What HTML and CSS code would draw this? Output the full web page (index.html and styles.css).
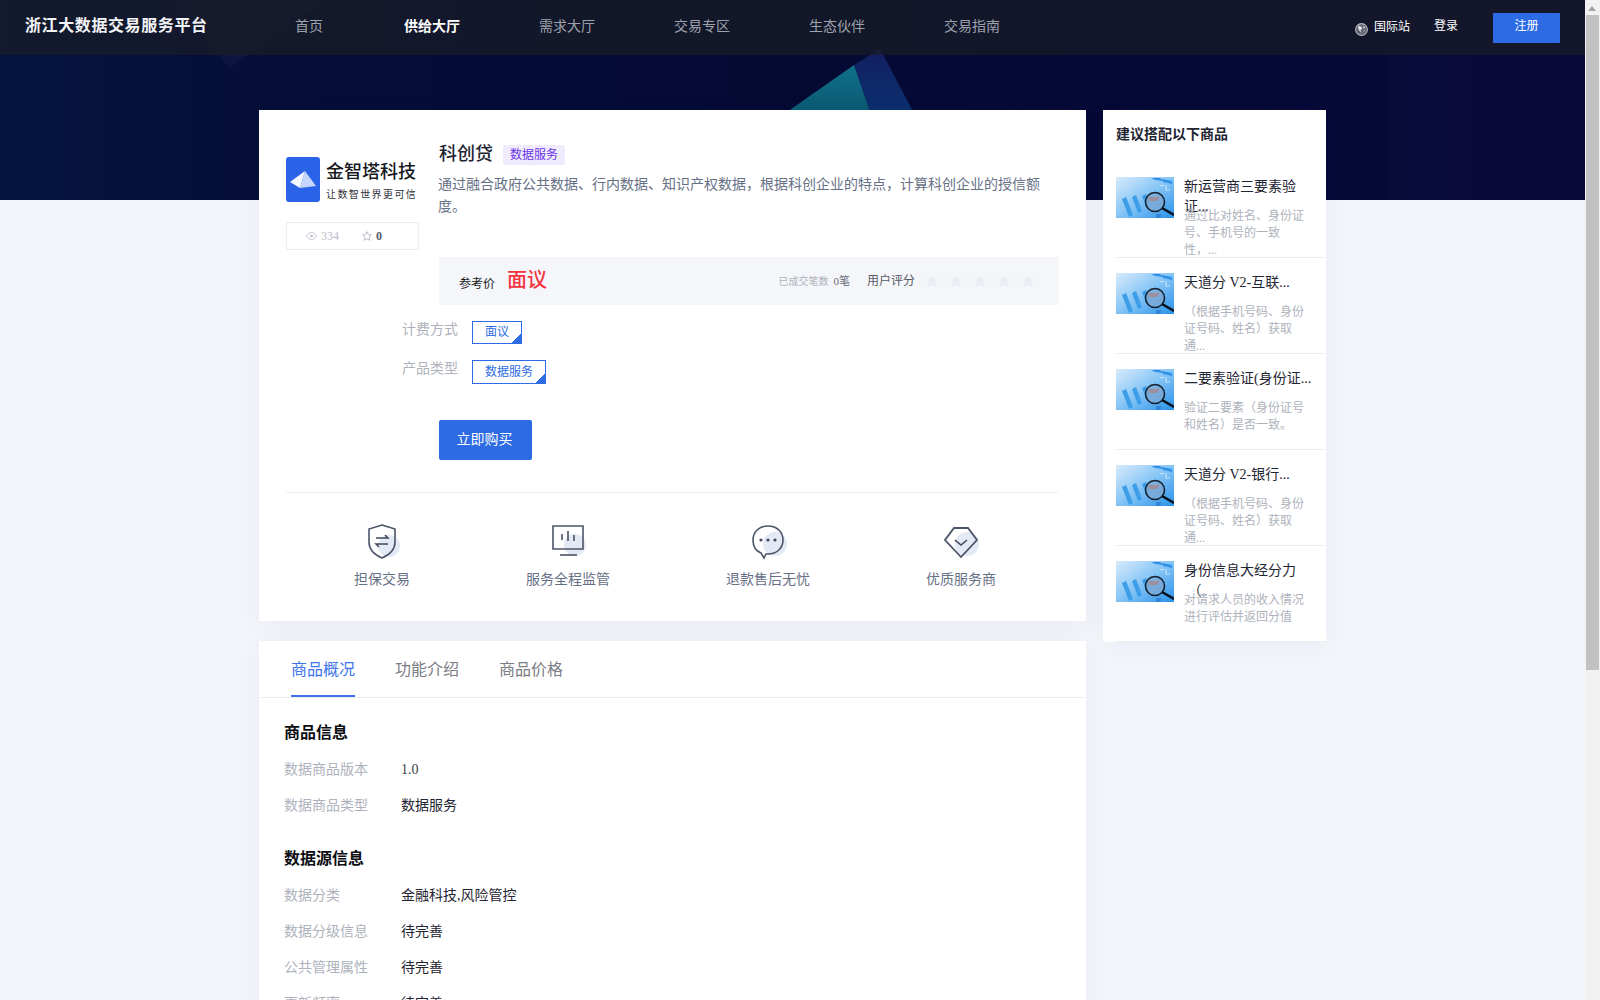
FILE: index.html
```html
<!DOCTYPE html>
<html lang="zh">
<head>
<meta charset="utf-8">
<title>科创贷 - 浙江大数据交易服务平台</title>
<link rel="stylesheet" href="styles.css">
</head>
<body>
<svg class="defs" width="0" height="0" aria-hidden="true">
  <defs>
    <linearGradient id="thumbBg" x1="0" y1="0" x2="1" y2="1">
      <stop offset="0" stop-color="#d8ebfc"/><stop offset=".5" stop-color="#84c4f6"/><stop offset="1" stop-color="#2a93ea"/>
    </linearGradient>
    <symbol id="thumb" viewBox="0 0 58 41">
      <rect width="58" height="41" fill="url(#thumbBg)"/>
      <path d="M35 1h9l4 3-9-1zM46 2l10 2v3l-9-2z" fill="#2f92e4"/>
      <path d="M44 9c2-1 3-1 4 0M50 8v5c2 1 3 0 4-1" fill="none" stroke="#eaf5ff" stroke-width=".8"/>
      <path d="M6 22l4-2 7 18-4 2zM16 20l4-2 6 16-4 2zM26 19l4-2 4 10-4 2z" fill="#3d9ee8"/>
      <path d="M40 37h5v4h-5z" fill="#2f86d6"/>
      <circle cx="39" cy="25" r="9.500" fill="#7fa8d2" fill-opacity=".75" stroke="#14222f" stroke-width="1.600"/>
      <path d="M33 20h11l-3 4h-9z" fill="#b87a70" fill-opacity=".55"/>
      <path d="M46 31l12 7" stroke="#0a1420" stroke-width="2.600"/>
    </symbol>
    <symbol id="star" viewBox="0 0 14 14">
      <path d="M7 .8l1.900 4.200 4.600.5-3.400 3.100 1 4.600L7 10.900l-4.100 2.300 1-4.600L.5 5.500l4.600-.5z" fill="#eaedf4"/>
    </symbol>
  </defs>
</svg>
<div class="viewport">
  <div class="page">
    <div class="hero-art">
      <svg width="1585" height="200" viewBox="0 0 1585 200" preserveAspectRatio="none" aria-hidden="true">
        <defs>
          <linearGradient id="heroBg" x1="0" y1="0" x2="1" y2="0">
            <stop offset="0" stop-color="#04143f"/><stop offset=".15" stop-color="#050f38"/><stop offset=".5" stop-color="#050a33"/><stop offset="1" stop-color="#070838"/>
          </linearGradient>
          <linearGradient id="teal" x1="0" y1="0" x2="0" y2="1">
            <stop offset="0" stop-color="#0f7089"/><stop offset=".4" stop-color="#0b5670"/><stop offset="1" stop-color="#0a4a66"/>
          </linearGradient>
          <linearGradient id="band" x1="0" y1="0" x2="0" y2="1">
            <stop offset="0" stop-color="#121f60"/><stop offset=".4" stop-color="#0c2f6e"/><stop offset="1" stop-color="#0b3370"/>
          </linearGradient>
        </defs>
        <rect width="1585" height="200" fill="url(#heroBg)"/>
        <rect x="1387" width="198" height="200" fill="#ffffff" fill-opacity=".012"/>
        <path d="M170 0h155l-95 68z" fill="#ffffff" fill-opacity=".03"/>
        <path d="M854 65L880 49 960 200H900z" fill="url(#band)"/>
        <path d="M854 65L740 145V200H900z" fill="url(#teal)"/>
      </svg>
    </div>

    <header class="topbar">
      <div class="brand">浙江大数据交易服务平台</div>
      <nav class="nav">
        <a class="nav-link">首页</a>
        <a class="nav-link is-active">供给大厅</a>
        <a class="nav-link">需求大厅</a>
        <a class="nav-link">交易专区</a>
        <a class="nav-link">生态伙伴</a>
        <a class="nav-link">交易指南</a>
      </nav>
      <div class="account">
        <svg class="globe" width="13" height="13" viewBox="0 0 12 12" aria-hidden="true">
          <circle cx="6" cy="6" r="5.400" fill="#5f6370" stroke="#b7bac2" stroke-width="1"/>
          <path d="M3 2.500l3 1 .5 2-1.500 1 1 3-2-2.500-1-2zM8 2.500l1.500 2-2 .5zM8 7l1-.5-1 2.500z" fill="#e6e7ea"/>
        </svg>
        <span class="intl">国际站</span>
        <span class="login">登录</span>
        <a class="register">注册</a>
      </div>
    </header>

    <main class="content">
      <div class="left-col">
        <section class="card product">
          <div class="product-top">
            <aside class="vendor">
              <div class="logo">
                <svg class="logo-mark" width="34" height="45" viewBox="0 0 34 45" aria-hidden="true">
                  <rect width="34" height="45" rx="3" fill="#2a62e8"/>
                  <path d="M19 14L4 25l10 6z" fill="#f4f7ff"/>
                  <path d="M19 14l11 15-16 2z" fill="#c6d5fb"/>
                </svg>
                <div class="logo-text">
                  <div class="logo-name">金智塔科技</div>
                  <div class="logo-slogan">让数智世界更可信</div>
                </div>
              </div>
              <div class="stats">
                <span class="stat">
                  <svg width="11" height="8" viewBox="0 0 11 8" aria-hidden="true"><path d="M.5 4C2 1.500 3.700.5 5.500.5S9 1.500 10.500 4C9 6.500 7.300 7.500 5.500 7.500S2 6.500.5 4z" fill="none" stroke="#c2c6d0"/><circle cx="5.500" cy="4" r="1.500" fill="#c2c6d0"/></svg>
                  334
                </span>
                <span class="stat stat-dark">
                  <svg width="10" height="10" viewBox="0 0 14 14" aria-hidden="true"><path d="M7 1l1.800 4 4.400.5-3.300 3 .9 4.500L7 10.800 3.200 13l.9-4.500-3.300-3L5.200 5z" fill="none" stroke="#b4b8c4" stroke-width="1.300"/></svg>
                  0
                </span>
              </div>
            </aside>
            <div class="summary">
              <div class="title-row">
                <h1 class="product-name">科创贷</h1>
                <span class="badge">数据服务</span>
              </div>
              <p class="description">通过融合政府公共数据、行内数据、知识产权数据，根据科创企业的特点，计算科创企业的授信额度。</p>
              <div class="price-box">
                <span class="price-label">参考价</span>
                <span class="price-value">面议</span>
                <span class="deals">已成交笔数</span>
                <span class="deals-num">0笔</span>
                <span class="rating-label">用户评分</span>
                <span class="stars">
                  <svg width="14" height="14"><use href="#star"/></svg>
                  <svg width="14" height="14"><use href="#star"/></svg>
                  <svg width="14" height="14"><use href="#star"/></svg>
                  <svg width="14" height="14"><use href="#star"/></svg>
                  <svg width="14" height="14"><use href="#star"/></svg>
                </span>
              </div>
            </div>
          </div>
          <div class="specs">
            <div class="spec"><span class="spec-label">计费方式</span><span class="tag">面议</span></div>
            <div class="spec"><span class="spec-label">产品类型</span><span class="tag">数据服务</span></div>
          </div>
          <a class="buy">立即购买</a>
          <div class="divider"></div>
          <div class="features">
            <div class="feature">
              <svg width="40" height="40" viewBox="0 0 40 40" aria-hidden="true">
                <circle cx="27" cy="25" r="11" fill="#e4e9f6"/>
                <path d="M20 4l13 4v13c0 8-6 13-13 16C13 34 7 29 7 21V8z" fill="none" stroke="#4b5468" stroke-width="1.600"/>
                <path d="M14 17h12l-3-3M26 23H14l3 3" fill="none" stroke="#3f4759" stroke-width="1.500"/>
              </svg>
              <span>担保交易</span>
            </div>
            <div class="feature">
              <svg width="40" height="40" viewBox="0 0 40 40" aria-hidden="true">
                <circle cx="27" cy="24" r="11" fill="#e4e9f6"/>
                <path d="M5 5h30v23H5z" fill="none" stroke="#4b5468" stroke-width="1.600"/>
                <path d="M12 34h17M14 19v-6M20 20V10M26 20v-6" fill="none" stroke="#3f4759" stroke-width="1.500"/>
              </svg>
              <span>服务全程监管</span>
            </div>
            <div class="feature">
              <svg width="40" height="40" viewBox="0 0 40 40" aria-hidden="true">
                <circle cx="27" cy="23" r="12" fill="#e4e9f6"/>
                <path d="M20 5c9 0 15 6 15 14s-6 14-15 14h-2l-2 4-3-5C8 30 5 25 5 19 5 11 11 5 20 5z" fill="none" stroke="#4b5468" stroke-width="1.600"/>
                <circle cx="13" cy="19" r="1.600" fill="#3f4759"/><circle cx="20" cy="19" r="1.600" fill="#3f4759"/><circle cx="27" cy="19" r="1.600" fill="#3f4759"/>
              </svg>
              <span>退款售后无忧</span>
            </div>
            <div class="feature">
              <svg width="40" height="40" viewBox="0 0 40 40" aria-hidden="true">
                <circle cx="26" cy="23" r="12" fill="#e4e9f6"/>
                <path d="M13 7h14l9 12-16 17L4 19z" fill="none" stroke="#4b5468" stroke-width="1.800"/>
                <path d="M14 19l6 5 6-5" fill="none" stroke="#3f4759" stroke-width="1.600"/>
              </svg>
              <span>优质服务商</span>
            </div>
          </div>
        </section>

        <section class="card detail">
          <div class="tabs">
            <a class="tab is-active">商品概况</a>
            <a class="tab">功能介绍</a>
            <a class="tab">商品价格</a>
          </div>
          <div class="detail-body">
            <h2 class="detail-title">商品信息</h2>
            <div class="row"><span class="row-label">数据商品版本</span><span class="row-value row-num">1.0</span></div>
            <div class="row"><span class="row-label">数据商品类型</span><span class="row-value">数据服务</span></div>
            <h2 class="detail-title detail-title-next">数据源信息</h2>
            <div class="row"><span class="row-label">数据分类</span><span class="row-value">金融科技,风险管控</span></div>
            <div class="row"><span class="row-label">数据分级信息</span><span class="row-value">待完善</span></div>
            <div class="row"><span class="row-label">公共管理属性</span><span class="row-value">待完善</span></div>
            <div class="row"><span class="row-label">更新频率</span><span class="row-value">待完善</span></div>
          </div>
        </section>
      </div>

      <aside class="card related">
        <h3 class="related-title">建议搭配以下商品</h3>
        <ul class="related-list">
          <li class="item">
            <svg class="thumb" width="58" height="41"><use href="#thumb"/></svg>
            <div class="item-text">
              <div class="item-name">新运营商三要素验证...</div>
              <p class="item-desc">通过比对姓名、身份证<br>号、手机号的一致<br>性，...</p>
            </div>
          </li>
          <li class="item">
            <svg class="thumb" width="58" height="41"><use href="#thumb"/></svg>
            <div class="item-text">
              <div class="item-name">天道分 V2-互联...</div>
              <p class="item-desc">（根据手机号码、身份<br>证号码、姓名）获取<br>通...</p>
            </div>
          </li>
          <li class="item">
            <svg class="thumb" width="58" height="41"><use href="#thumb"/></svg>
            <div class="item-text">
              <div class="item-name item-name-wide">二要素验证(身份证...</div>
              <p class="item-desc">验证二要素（身份证号<br>和姓名）是否一致。</p>
            </div>
          </li>
          <li class="item">
            <svg class="thumb" width="58" height="41"><use href="#thumb"/></svg>
            <div class="item-text">
              <div class="item-name">天道分 V2-银行...</div>
              <p class="item-desc">（根据手机号码、身份<br>证号码、姓名）获取<br>通...</p>
            </div>
          </li>
          <li class="item">
            <svg class="thumb" width="58" height="41"><use href="#thumb"/></svg>
            <div class="item-text">
              <div class="item-name">身份信息大经分力<br>&nbsp;（</div>
              <p class="item-desc">对请求人员的收入情况<br>进行评估并返回分值</p>
            </div>
          </li>
        </ul>
      </aside>
    </main>
  </div>

  <div class="scrollbar" aria-hidden="true">
    <div class="scroll-arrow"></div>
    <div class="scroll-thumb"></div>
  </div>
</div>
</body>
</html>
```

FILE: styles.css
```css
* { box-sizing: border-box; }

html, body {
  margin: 0;
  height: 100%;
  overflow: hidden;
}

body {
  font-family: "Liberation Serif", "Noto Sans CJK SC", serif;
  background: #f3f5fa;
  color: #1f2533;
}

.defs { position: absolute; }

.viewport {
  display: flex;
  height: 1000px;
}

.page {
  position: relative;
  width: 1585px;
  height: 1000px;
  overflow: hidden;
}

.hero-art {
  position: absolute;
  left: 0;
  top: 0;
  width: 1585px;
  height: 200px;
}

.hero-art svg { display: block; }

/* header */
.topbar {
  position: relative;
  display: flex;
  align-items: center;
  height: 55px;
  background: rgba(25, 28, 38, 0.7);
}

.brand {
  width: 270px;
  padding-left: 25px;
  padding-bottom: 7px;
  font-size: 16px;
  font-weight: 700;
  letter-spacing: 0.6px;
  color: #f2f3f6;
  white-space: nowrap;
}

.nav {
  display: flex;
  gap: 79px;
  margin-left: 25px;
  padding-bottom: 5px;
}

.nav-link {
  font-size: 14px;
  color: #9ea2ac;
}

.nav-link:first-child { margin-right: 2px; }

.nav-link.is-active {
  font-weight: 700;
  color: #fff;
}

.account {
  display: flex;
  align-items: center;
  margin-left: auto;
  padding-right: 25px;
  font-size: 12px;
  color: #fff;
}

.globe { margin-top: 4px; }
.intl { margin-left: 6px; padding-bottom: 4px; }
.login { margin-left: 24px; padding-bottom: 6px; }

.register {
  display: flex;
  align-items: center;
  justify-content: center;
  width: 67px;
  height: 30px;
  margin-left: 35px;
  margin-top: 1px;
  padding-bottom: 6px;
  border-radius: 1px;
  background: #2d6be4;
}

/* layout */
.content {
  position: relative;
  display: flex;
  align-items: flex-start;
  gap: 17px;
  margin-top: 55px;
  padding-left: 259px;
}

.left-col {
  display: flex;
  flex-direction: column;
  gap: 20px;
  width: 827px;
}

.card {
  background: #fff;
  box-shadow: 0 4px 24px rgba(40, 50, 100, 0.05);
}

/* product card */
.product {
  height: 511px;
  padding: 30px 27px 0 27px;
}

.product-top {
  display: flex;
  gap: 20px;
}

.vendor {
  flex: none;
  width: 133px;
  padding-top: 17px;
}

.logo {
  display: flex;
  gap: 6px;
  height: 45px;
}

.logo-mark { flex: none; }

.logo-text { padding-top: 2px; }

.logo-name {
  font-size: 18px;
  line-height: 26px;
  font-weight: 500;
  color: #17191f;
  white-space: nowrap;
}

.logo-slogan {
  margin-top: 3px;
  font-size: 10px;
  line-height: 14px;
  letter-spacing: 1.4px;
  color: #2f323a;
  white-space: nowrap;
}

.stats {
  display: flex;
  align-items: center;
  height: 28px;
  margin-top: 20px;
  padding-left: 19px;
  border: 1px solid #eceef3;
  font-size: 12px;
  color: #b9bdc8;
}

.stat {
  display: flex;
  align-items: center;
  gap: 4px;
  width: 61px;
}

.stat-dark { color: #555a68; font-weight: 700; }

.summary { flex: 1; }

.title-row {
  display: flex;
  align-items: center;
  height: 26px;
}

.product-name {
  margin: -2px 10px 0 0;
  font-size: 18px;
  font-weight: 500;
  color: #1f2533;
}

.badge {
  padding: 0 7px;
  font-size: 12px;
  line-height: 20px;
  margin-top: 3px;
  border-radius: 2px;
  color: #6a34e8;
  background: #f0ebfc;
}

.description {
  margin: 8px 0 0 -1px;
  font-size: 14px;
  line-height: 22px;
  color: #667085;
}

.price-box {
  display: flex;
  align-items: center;
  height: 48px;
  margin-top: 39px;
  padding: 0 24px 0 20px;
  background: #f5f6f9;
}

.price-label {
  margin-top: 3px;
  font-size: 12px;
  color: #14161c;
}

.price-value {
  margin-left: 12px;
  margin-bottom: 5px;
  font-size: 20px;
  font-weight: 500;
  color: #f5333f;
}

.deals {
  margin-left: auto;
  margin-bottom: 2px;
  font-size: 10px;
  color: #aeb2bc;
}

.deals-num {
  margin-left: 5px;
  margin-bottom: 2px;
  font-size: 11px;
  color: #6a6f7c;
}

.rating-label {
  margin-left: 17px;
  margin-bottom: 2px;
  font-size: 12px;
  color: #555a66;
}

.stars {
  display: flex;
  gap: 10px;
  margin-left: 10px;
}

/* specs */
.specs {
  display: flex;
  flex-direction: column;
  gap: 16px;
  margin-top: 16px;
  padding-left: 116px;
}

.spec {
  display: flex;
  align-items: flex-start;
  gap: 14px;
}

.spec-label {
  width: 56px;
  font-size: 14px;
  line-height: 18px;
  color: #aeb2bc;
}

.tag {
  height: 23px;
  padding: 0 12px;
  border: 1px solid #2d6be4;
  font-size: 12px;
  line-height: 21px;
  color: #2d6be4;
  background: linear-gradient(135deg, transparent 50%, #2d6be4 50%) right bottom / 9px 9px no-repeat;
}

.spec + .spec .tag { height: 24px; line-height: 22px; }

.buy {
  display: flex;
  align-items: center;
  justify-content: center;
  width: 93px;
  height: 40px;
  margin: 36px 0 0 153px;
  padding: 0 2px 4px 0;
  border-radius: 2px;
  font-size: 14px;
  color: #fff;
  background: #2d6be4;
}

.divider {
  width: 772px;
  height: 1px;
  margin-top: 32px;
  background: #eceef2;
}

.features {
  display: flex;
  gap: 116px;
  margin-top: 28px;
  padding-left: 68px;
}

.feature {
  display: flex;
  flex-direction: column;
  align-items: center;
  gap: 8px;
  font-size: 14px;
  line-height: 22px;
  color: #667085;
  white-space: nowrap;
}

/* detail card */
.detail { height: 400px; }

.tabs {
  display: flex;
  gap: 40px;
  height: 57px;
  padding-left: 32px;
  border-bottom: 1px solid #eceef2;
}

.tab {
  height: 56px;
  font-size: 16px;
  line-height: 58px;
  color: #7a7d85;
}

.tab.is-active {
  color: #3d74ee;
  border-bottom: 2px solid #3d74ee;
}

.detail-body { padding: 23px 0 0 25px; }

.detail-title {
  margin: 0 0 6px;
  font-size: 16px;
  line-height: 24px;
  font-weight: 700;
  color: #0b0d12;
}

.detail-title-next { margin-top: 24px; }

.row {
  display: flex;
  align-items: center;
  height: 36px;
  padding-bottom: 3px;
  font-size: 14px;
}

.row-label {
  width: 117px;
  color: #aeb2bc;
}

.row-value { color: #1f2533; }

.row-num { padding-top: 5px; color: #3a3f4c; }

/* related */
.related {
  width: 223px;
  height: 532px;
  padding-left: 13px;
}

.related-title {
  margin: 0;
  padding-top: 15px;
  height: 52px;
  font-size: 14px;
  line-height: 20px;
  font-weight: 700;
  color: #1f2533;
}

.related-list {
  margin: 0;
  padding: 0;
  list-style: none;
}

.item {
  display: flex;
  gap: 10px;
  height: 96px;
  padding-top: 15px;
  border-bottom: 1px solid #eceef2;
  overflow: hidden;
}

.thumb { flex: none; }

.item-text { width: 130px; }

.item-name {
  height: 28px;
  font-size: 14px;
  line-height: 20px;
  color: #1f2533;
  width: 116px;
}

.item-name-wide { width: 132px; white-space: nowrap; }

.item-desc {
  margin: 3px 0 0;
  font-size: 12px;
  line-height: 17px;
  color: #aeb2bc;
  white-space: nowrap;
}

/* scrollbar */
.scrollbar {
  flex: none;
  width: 15px;
  height: 1000px;
  background: #f1f1f1;
}

.scroll-arrow {
  width: 0;
  height: 0;
  margin: 6px 0 0 3px;
  border-left: 4px solid transparent;
  border-right: 4px solid transparent;
  border-bottom: 5px solid #a3a3a3;
}

.scroll-thumb {
  width: 13px;
  height: 655px;
  margin: 4px 0 0 1px;
  background: #c1c1c1;
}
```
